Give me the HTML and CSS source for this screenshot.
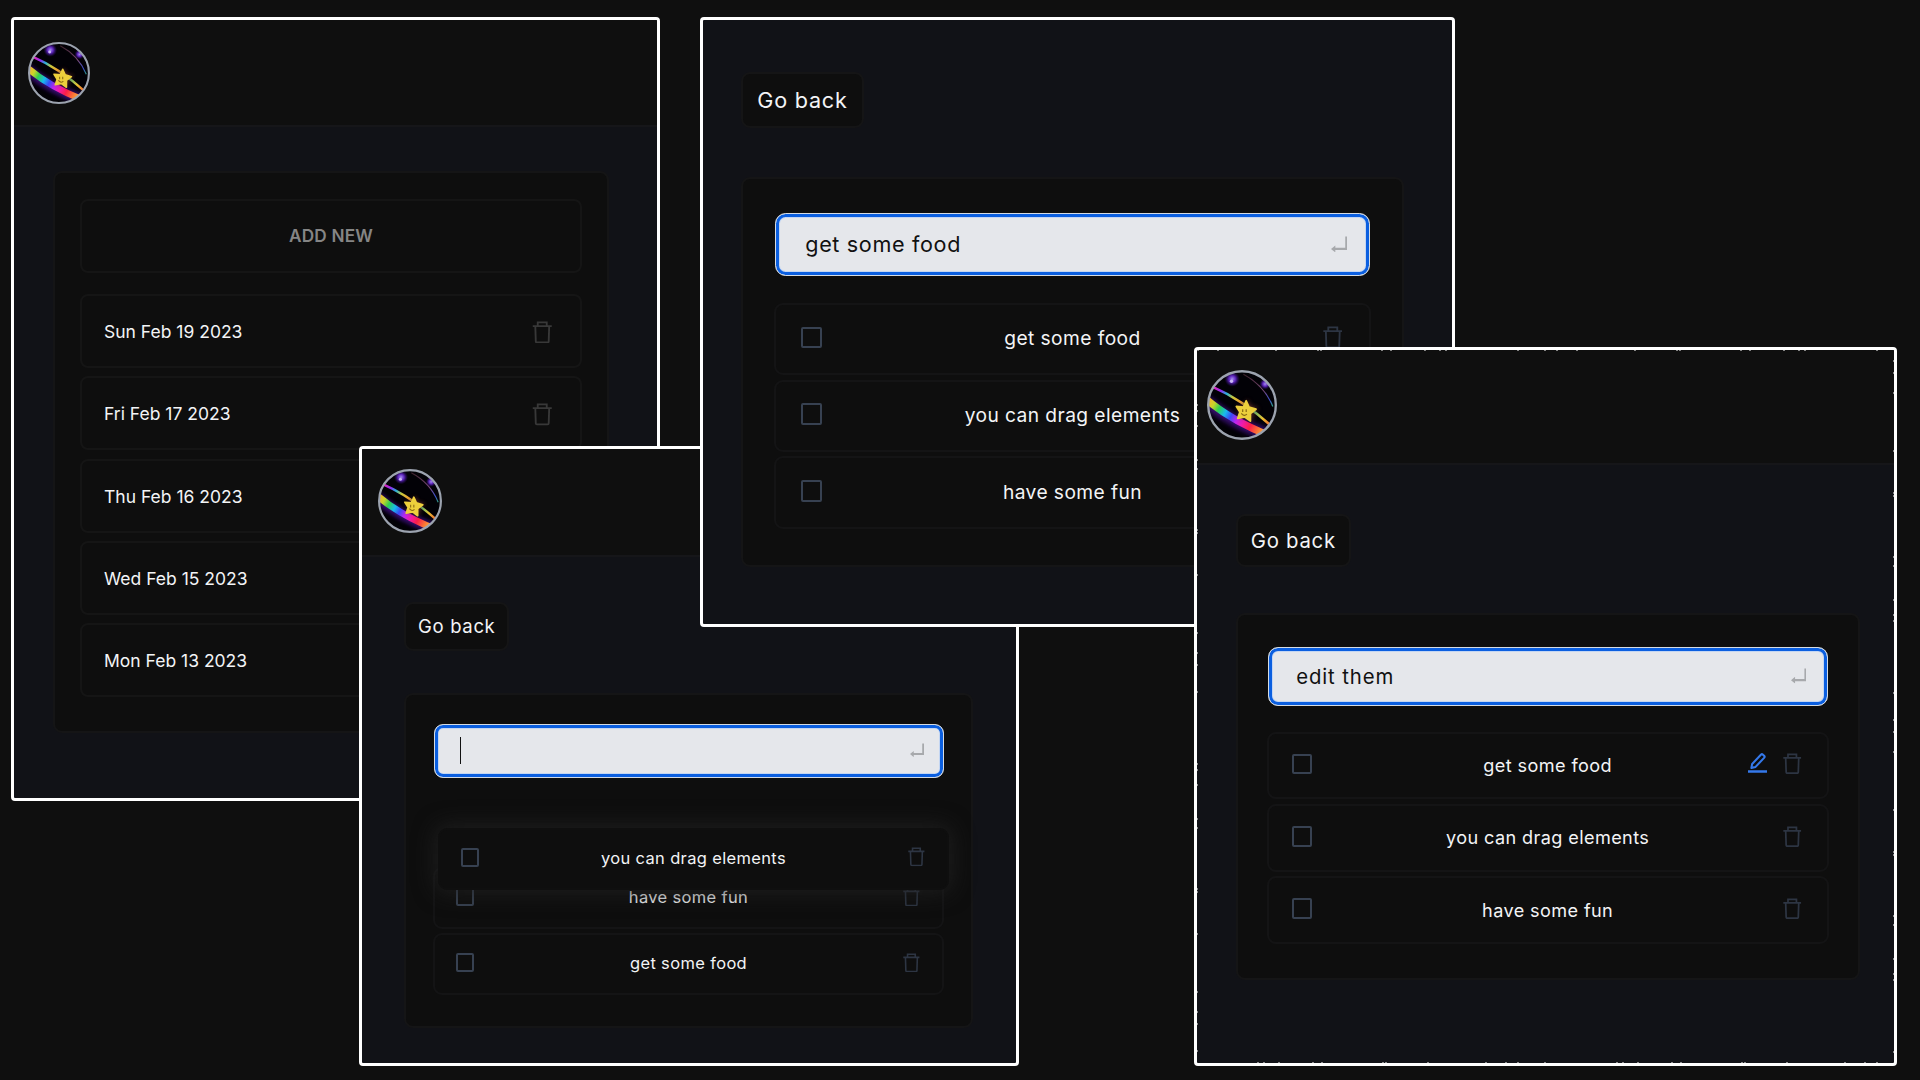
FILE: index.html
```
<!DOCTYPE html>
<html lang="en">
<head>
<meta charset="utf-8">
<title>Todo lists</title>
<link rel="stylesheet" href="styles.css">
</head>
<body>
<svg class="defs" aria-hidden="true">
  <defs>
    <linearGradient id="rainbow" gradientUnits="userSpaceOnUse" x1="2" y1="44" x2="82" y2="90">
      <stop offset="0" stop-color="#f5b52e"/><stop offset=".1" stop-color="#c9d52a"/><stop offset=".2" stop-color="#2fd04f"/>
      <stop offset=".32" stop-color="#18b9f0"/><stop offset=".42" stop-color="#3a48f5"/><stop offset=".53" stop-color="#c026f0"/>
      <stop offset=".63" stop-color="#f01bb0"/><stop offset=".76" stop-color="#fb1f48"/><stop offset=".9" stop-color="#fb7a35"/><stop offset="1" stop-color="#f7b83c"/>
    </linearGradient>
    <linearGradient id="ribbon" gradientUnits="userSpaceOnUse" x1="8" y1="25" x2="90" y2="80">
      <stop offset="0" stop-color="#f020b0"/><stop offset=".13" stop-color="#8a30f0"/><stop offset=".22" stop-color="#25b0d8"/>
      <stop offset=".32" stop-color="#c8c83a"/><stop offset=".45" stop-color="#f0a030"/><stop offset=".7" stop-color="#5fc070"/>
      <stop offset=".85" stop-color="#e8c030"/><stop offset="1" stop-color="#f06030"/>
    </linearGradient>
    <linearGradient id="thread" x1="0" y1="0" x2="1" y2="1">
      <stop offset="0" stop-color="#3a2028"/><stop offset=".6" stop-color="#7a4a78"/><stop offset=".85" stop-color="#3a50d0"/><stop offset="1" stop-color="#30a080"/>
    </linearGradient>
    <radialGradient id="orb"><stop offset="0" stop-color="#a58af0"/><stop offset=".45" stop-color="#5a22b8"/><stop offset="1" stop-color="#2c0868" stop-opacity="0"/></radialGradient>
    <filter id="glow" x="-30%" y="-30%" width="160%" height="160%"><feGaussianBlur stdDeviation="3.5"/></filter>
    <clipPath id="disc"><circle cx="50" cy="50" r="48"/></clipPath>
    <symbol id="avatar" viewBox="0 0 100 100">
      <circle cx="50" cy="50" r="48" fill="#020106"/>
      <g clip-path="url(#disc)">
        <path d="M-2 44Q36 76 88 93" fill="none" stroke="#5a14b8" stroke-width="17" opacity=".6" filter="url(#glow)"/>
        <path d="M52 6Q82 22 94 52" fill="none" stroke="url(#thread)" stroke-width="1.8"/>
        <path d="M8 24Q50 42 92 80" fill="none" stroke="url(#ribbon)" stroke-width="3.6"/>
        <path d="M-2 41Q34 72 90 94" fill="none" stroke="url(#rainbow)" stroke-width="10.5"/>
        <circle cx="36" cy="13" r="11" fill="url(#orb)"/>
        <circle cx="35" cy="16" r="2.4" fill="#c9b8f5"/>
        <circle cx="83" cy="20" r="8" fill="url(#orb)"/>
        <path d="M58 42L62 52L74 54L65 61L66 72L56 67L46 71L49 60L42 51L53 51Z" fill="#7a3a30" opacity=".8" filter="url(#glow)"/>
        <path d="M56 44L60 53L70 56L62 62L62 73L54 67L44 69L47 60L42 52L52 53Z" fill="#edcf3c" stroke="#edcf3c" stroke-width="2.6" stroke-linejoin="round"/>
        <path d="M51 56v4M56 56v4M49 62q4 5 8 1" fill="none" stroke="#8a6a14" stroke-width="1.7"/>
      </g>
      <circle cx="50" cy="50" r="48.3" fill="none" stroke="#9ca3af" stroke-width="3.4"/>
    </symbol>
    <symbol id="trash" viewBox="0 0 20 23">
      <path d="M.3 5.2h19.4M5.4 5V1.4h9.2V5M2.9 5.4l.5 15.4q0 1.2 1.2 1.2h10.8q1.2 0 1.2-1.2l.5-15.4" fill="none" stroke="currentColor" stroke-width="1.9"/>
    </symbol>
    <symbol id="enter" viewBox="0 0 16 16">
      <path d="M14.9 .5v12H3" fill="none" stroke="currentColor" stroke-width="2.2"/>
      <path d="M0 12.5l4.2-3.4v6.8z" fill="currentColor"/>
    </symbol>
    <symbol id="pencil" viewBox="0 0 20 20">
      <path d="M3.4 14.8l.8-4L13.2 1.3q.8-.7 1.6 0l1.6 1.6q.7.8 0 1.6L7.6 13.8z" fill="none" stroke="currentColor" stroke-width="2.1" stroke-linejoin="round"/>
      <path d="M0 18.4h20" stroke="currentColor" stroke-width="2.6"/>
    </symbol>
  </defs>
</svg>

<main class="desktop">
  <section class="window window-lists">
    <header class="topbar"><svg class="avatar"><use href="#avatar"/></svg></header>
    <div class="page">
      <div class="card">
        <button class="list add">ADD NEW</button>
        <div class="list"><span>Sun Feb 19 2023</span><svg class="trash"><use href="#trash"/></svg></div>
        <div class="list"><span>Fri Feb 17 2023</span><svg class="trash"><use href="#trash"/></svg></div>
        <div class="list"><span>Thu Feb 16 2023</span><svg class="trash"><use href="#trash"/></svg></div>
        <div class="list"><span>Wed Feb 15 2023</span><svg class="trash"><use href="#trash"/></svg></div>
        <div class="list"><span>Mon Feb 13 2023</span><svg class="trash"><use href="#trash"/></svg></div>
      </div>
    </div>
  </section>

  <section class="window window-drag">
    <header class="topbar"><svg class="avatar"><use href="#avatar"/></svg></header>
    <div class="page">
      <button class="back">Go back</button>
      <div class="card">
        <div class="field"><span class="caret"></span><svg class="enter"><use href="#enter"/></svg></div>
        <div class="todos">
          <div class="slot"></div>
          <div class="todo"><i class="check"></i><span>have some fun</span><div class="tools"><svg class="trash"><use href="#trash"/></svg></div></div>
          <div class="todo"><i class="check"></i><span>get some food</span><div class="tools"><svg class="trash"><use href="#trash"/></svg></div></div>
          <div class="todo dragged"><i class="check"></i><span>you can drag elements</span><div class="tools"><svg class="trash"><use href="#trash"/></svg></div></div>
        </div>
      </div>
    </div>
  </section>

  <section class="window window-add">
    <div class="page">
      <button class="back">Go back</button>
      <div class="card">
        <div class="field"><span class="value">get some food</span><svg class="enter"><use href="#enter"/></svg></div>
        <div class="todos">
          <div class="todo"><i class="check"></i><span>get some food</span><div class="tools"><svg class="trash"><use href="#trash"/></svg></div></div>
          <div class="todo"><i class="check"></i><span>you can drag elements</span><div class="tools"><svg class="trash"><use href="#trash"/></svg></div></div>
          <div class="todo"><i class="check"></i><span>have some fun</span><div class="tools"><svg class="trash"><use href="#trash"/></svg></div></div>
        </div>
      </div>
    </div>
  </section>

  <section class="window window-edit">
    <header class="topbar"><svg class="avatar"><use href="#avatar"/></svg></header>
    <div class="page">
      <button class="back">Go back</button>
      <div class="card">
        <div class="field"><span class="value wide">edit them</span><svg class="enter"><use href="#enter"/></svg></div>
        <div class="todos">
          <div class="todo"><i class="check"></i><span>get some food</span><div class="tools"><svg class="pencil"><use href="#pencil"/></svg><svg class="trash"><use href="#trash"/></svg></div></div>
          <div class="todo"><i class="check"></i><span>you can drag elements</span><div class="tools"><svg class="trash"><use href="#trash"/></svg></div></div>
          <div class="todo"><i class="check"></i><span>have some fun</span><div class="tools"><svg class="trash"><use href="#trash"/></svg></div></div>
        </div>
      </div>
    </div>
    <svg class="specks"><rect x=".5" y=".5" width="696" height="712"/></svg>
  </section>
</main>
</body>
</html>
```
FILE: styles.css
```
* { box-sizing: border-box; }

body {
  margin: 0;
  background: #0f0f0f;
  color: #f3f4f6;
  font-family: Inter, "Open Sans", sans-serif;
}

.defs { position: absolute; width: 0; height: 0; }

.desktop {
  position: relative;
  width: 1920px;
  height: 1080px;
  overflow: hidden;
}

/* windows on the canvas */
.window {
  position: absolute;
  border: 3px solid #fff;
  border-radius: 4px;
  background: #111217;
  overflow: hidden;
}
.window-lists { left: 11px; top: 17px; width: 649px; height: 784px; font-size: 17.5px; }
.window-drag { left: 359px; top: 446px; width: 660px; height: 620px; font-size: 16.48px; }
.window-add { left: 700px; top: 17px; width: 755px; height: 610px; font-size: 19.2px; }
.window-edit { left: 1194px; top: 347px; width: 703px; height: 719px; font-size: 18.08px; }

.topbar {
  display: flex;
  background: #0f0f0f;
  border-bottom: 2px solid #161619;
}
.window-lists .topbar { height: 107px; padding: 22px 0 0 13.5px; }
.window-drag .topbar { height: 108px; padding: 20px 0 0 16px; }
.window-edit .topbar { height: 115px; padding: 20px 0 0 10px; }
.avatar { width: 62px; height: 62px; }
.window-drag .avatar { width: 64px; height: 64px; }
.window-edit .avatar { width: 70px; height: 70px; }

.page {
  display: flex;
  flex-direction: column;
  align-items: flex-start;
  padding: 51.5px 0 0 38px;
}
.window-lists .page { padding: 43.5px 0 0 39px; }
.window-drag .page { padding: 45px 0 0 42px; }
.window-edit .page { padding: 48.5px 0 0 38.5px; }

.card {
  width: 34.55em;
  padding: 1.75em 1.64em 1.88em;
  background: #0e0e0e;
  border: 2px solid #151516;
  border-radius: 9px;
}
.window-lists .card {
  display: flex;
  flex-direction: column;
  gap: 8.3px;
  width: 556px;
  padding: 26px 25px 34px;
}

button { font: inherit; color: inherit; background: none; padding: 0; }

/* date lists */
.list {
  display: flex;
  align-items: center;
  justify-content: space-between;
  height: 74px;
  padding: 1px 28px 0 22px;
  border: 2px solid #151515;
  border-radius: 8px;
}
.list.add {
  justify-content: center;
  margin-bottom: 13.4px;
  padding: 0;
  font-size: 17.2px;
  font-weight: 600;
  letter-spacing: .2px;
  color: #858585;
}
.list .trash { width: 20.5px; height: 22.5px; margin-top: 1px; color: #383838; }

/* todo page */
.back {
  width: 6.4em;
  height: 2.95em;
  margin-bottom: 2.57em;
  background: #0e0e0e;
  border: 2px solid #151516;
  border-radius: 9px;
  font-size: 1em;
}
.back::first-line { font-size: 1.125em; letter-spacing: .036em; }

.field {
  display: flex;
  align-items: center;
  justify-content: space-between;
  height: 3.28em;
  margin: 0 .05em 1.4em;
  padding: 0 1.13em .05em 1.5em;
  background: #e5e7eb;
  border: 1px solid #d5dce3;
  border-radius: .55em;
  box-shadow: inset 0 0 0 3px #0b5fe0, inset 0 0 0 4px #c3d6f3;
  color: #111;
}
.value { font-size: 1.125em; letter-spacing: .03em; }
.value.wide { letter-spacing: .045em; }
.caret { width: 1.5px; height: 1.65em; background: #111; }
.enter { width: .86em; height: .86em; color: #a7a9ac; }

.todos {
  position: relative;
  display: flex;
  flex-direction: column;
  gap: .24em;
}
.todo, .slot { height: 3.76em; }
.todo {
  display: grid;
  grid-template-columns: 1fr auto 1fr;
  align-items: center;
  padding: 0 1.38em .06em 1.26em;
  border: 2px solid #141415;
  border-radius: 9px;
  letter-spacing: .022em;
}
.todo > span { padding-left: .1em; }
.check {
  width: 1.13em;
  height: 1.13em;
  margin-bottom: .1em;
  border: 2px solid #374151;
  border-radius: 2px;
}
.tools {
  display: flex;
  justify-content: flex-end;
  gap: .87em;
  margin-bottom: .12em;
}
.tools .trash { width: 1.02em; height: 1.17em; color: #2d3543; }
.pencil { width: 1.1em; height: 1.12em; color: #3478ea; }

.dragged {
  position: absolute;
  left: .3em;
  top: 1.62em;
  width: 100%;
  background: #0e0e0e;
  border-color: #0f0f0f;
  box-shadow: 0 0 22px 2px rgba(34, 34, 34, .85);
}

/* irregular white specks along the inner edge */
.specks { position: absolute; inset: 0; width: 697px; height: 713px; }
.specks rect {
  fill: none;
  stroke: #fff;
  stroke-width: 1;
  stroke-dasharray: 1 19 1 57 1 41 1 2 1 60 1 8 1 33 1 14 1 5 1 71 1 26 1 11;
}
```
